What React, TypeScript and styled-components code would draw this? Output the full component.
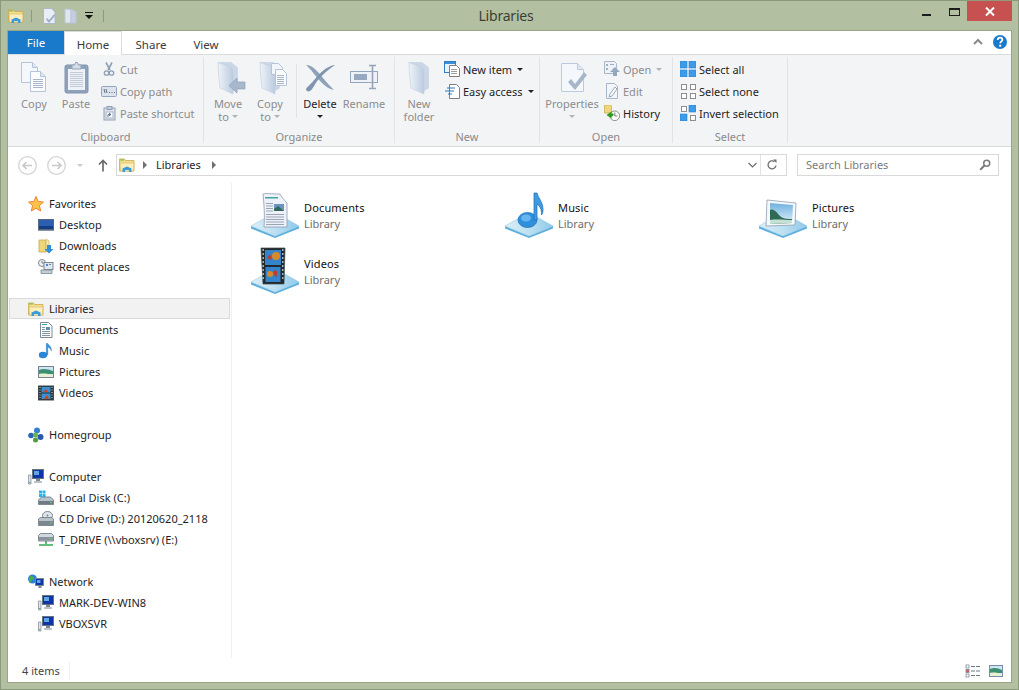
import React from "react";
import styled, { createGlobalStyle } from "styled-components";

const Global = createGlobalStyle`
  html, body { margin: 0; padding: 0; background: #b3bfa1; overflow: hidden; }
  body { font-family: "Noto Sans", "Open Sans", sans-serif; font-size: 11px; color: #1e1e1e; }
  * { box-sizing: border-box; }
  svg { display: block; flex: none; }
`;

const Frame = styled.div`
  width: 1019px; height: 690px; background: #b3bfa1; border: 1px solid #8b9a7a;
  padding: 0 7px 7px; display: flex; flex-direction: column;
`;
const TitleBar = styled.header`
  height: 30px; display: grid; grid-template-columns: 1fr auto 1fr; flex: none;
`;
const Qat = styled.div`display: flex; align-items: center; height: 29px;`;
const QatSep = styled.span<{ $mx: number }>`
  width: 1px; height: 12px; background: #8e9a80; margin: 0 ${p => p.$mx}px; 
`;
const Title = styled.h1`
  margin: 0; font-size: 14px; font-weight: 400; color: #3a3f36; line-height: 30px; padding-right: 7px; letter-spacing: -0.2px;
`;
const Controls = styled.div`display: flex; justify-content: flex-end; align-items: flex-start; margin-right: -1px;`;
const MinBtn = styled.div`width: 9px; height: 2px; background: #1c1c1c; margin: 13px 18px 0 0;`;
const MaxBtn = styled.div`width: 11px; height: 8px; border: 1px solid #1c1c1c; border-top-width: 2px; margin: 7px 7px 0 0;`;
const CloseBtn = styled.div`
  width: 45px; height: 20px; background: #c75050; color: #fff; display: flex; align-items: center; justify-content: center;
`;
const Inner = styled.div`
  flex: 1; display: flex; flex-direction: column; background: #fff; box-shadow: 0 0 0 1px #97a585;
`;
const TabRow = styled.nav`
  height: 24px; flex: none; display: flex; border-bottom: 1px solid #dadbdc; align-items: stretch;
`;
const FileTab = styled.div`
  width: 56px; height: 23px; background: #1979ca; color: #fff; font-size: 11.5px; display: flex; align-items: center; justify-content: center;
`;
const Tab = styled.div<{ $w: number; $active?: boolean }>`
  width: ${p => p.$w}px; height: 24px; display: flex; align-items: center; justify-content: center; font-size: 11.5px; color: #3b3b3b; padding-top: 2px;
  ${p => p.$active ? "background:#fff;border:1px solid #dadbdc;border-bottom:0;z-index:1;" : ""}
`;
const TabTools = styled.div`margin-left: auto; display: flex; align-items: center; gap: 10px; padding: 0 4px 2px 0;`;
const Ribbon = styled.section`
  height: 92px; flex: none; background: #f3f4f6; border-bottom: 1px solid #dadbdc; display: flex; align-items: stretch; padding: 2px 0 3px;
`;
const Group = styled.div<{ $w: number }>`
  width: ${p => p.$w}px; flex: none; border-right: 1px solid #e2e3e5; display: flex; flex-direction: column;
`;
const GroupBody = styled.div<{ $pl: number }>`
  flex: 1; display: flex; align-items: flex-start; padding: 2px 0 0 ${p => p.$pl}px;
`;
const GroupLabel = styled.div`
  height: 16px; line-height: 19px; text-align: center; color: #8a8a8a; font-size: 11px;
`;
const Large = styled.div<{ $w: number; $dark?: boolean }>`
  width: ${p => p.$w}px; flex: none; display: flex; flex-direction: column; align-items: center; color: ${p => p.$dark ? "#1e1e1e" : "#8c8c8c"};
`;
const LargeIcon = styled.div`height: 38px; padding-top: 1px;`;
const LargeLine = styled.div`height: 13px; line-height: 13px; font-size: 11px; white-space: nowrap; display: flex; align-items: center; gap: 3px;`;
const Caret = styled.span<{ $c?: string }>`
  display: inline-block; width: 0; height: 0; border: 3px solid transparent; border-bottom-width: 0; border-top-color: ${p => p.$c || "#b4b4b4"}; 
`;
const Stack = styled.div<{ $ml: number }>`margin-left: ${p => p.$ml}px; display: flex; flex-direction: column;`;
const Small = styled.div<{ $dark?: boolean }>`
  height: 22px; padding-bottom: 2px; display: flex; align-items: center; gap: 3px; white-space: nowrap; font-size: 11px; color: ${p => p.$dark ? "#1e1e1e" : "#8c8c8c"};
`;
const SmallCaret = styled.span`margin-left: 2px; display: flex;`;
const RibbonSep = styled.div`width: 1px; height: 54px; background: #e2e3e5; margin: 5px 1px 0 5px; flex: none;`;

const AddressRow = styled.div`
  height: 36px; flex: none; display: flex; align-items: center; padding: 0 12px 0 10px; font-size: 11px;
`;
const NavGroup = styled.div`display: flex; align-items: center; width: 98px; flex: none;`;
const AddressField = styled.div`
  width: 671px; height: 22px; border: 1px solid #d9d9d9; display: flex; align-items: center; padding-left: 2px; color: #1e1e1e;
`;
const Crumb = styled.span`margin: 0 3px 2px 9px;`;
const CrumbArrow = styled.span`
  width: 0; height: 0; border: 4px solid transparent; border-right-width: 0; border-left: 4px solid #6f6f6f; margin-left: 8px;
`;
const FieldEnd = styled.div`margin-left: auto; display: flex; align-items: center; height: 100%; padding-right: 8px;`;
const FieldSep = styled.span`width: 1px; height: 20px; background: #e3e3e3; margin: 0 5px 0 3px;`;
const SearchField = styled.div`
  width: 202px; height: 22px; margin-left: 10px; border: 1px solid #d9d9d9; display: flex; align-items: center; justify-content: space-between; padding: 0 7px 0 8px; color: #7a7a7a;
`;
const SearchText = styled.span`margin-bottom: 2px;`;
const Main = styled.main`flex: 1; display: flex; min-height: 0;`;
const Sidebar = styled.aside`
  width: 224px; flex: none; border-right: 1px solid #eff0f1; padding: 10px 0 0 1px; margin-bottom: 2px;
`;
const TreeRow = styled.div<{ $level?: number; $selected?: boolean }>`
  width: 221px; height: 21px; display: flex; align-items: center; gap: 5px; padding-left: ${p => (p.$level || 0) * 10 + 18}px;
  border: 1px solid ${p => p.$selected ? "#dadada" : "transparent"}; background: ${p => p.$selected ? "#f2f2f2" : "transparent"};
  white-space: nowrap; color: #1e1e1e; font-size: 11px;
`;
const TreeGap = styled.div`height: 21px;`;
const Items = styled.div`
  flex: 1; padding: 7px 0 0 18px; display: grid; grid-template-columns: repeat(3, 254px); grid-auto-rows: 48px; row-gap: 8px; align-content: start;
`;
const Item = styled.div`display: flex; gap: 4px;`;
const ItemText = styled.div`padding-top: 10px; line-height: 16px; font-size: 11px;`;
const ItemName = styled.div`color: #111; letter-spacing: .15px;`;
const ItemKind = styled.div`color: #6d6d6d;`;
const StatusBar = styled.footer`
  height: 22px; flex: none; display: flex; align-items: center; padding: 0 8px 0 14px; color: #444; font-size: 11px;
`;
const StatusText = styled.span`width: 48px; border-right: 1px solid #efefef; line-height: 18px;`;
const StatusIcons = styled.div`margin-left: auto; display: flex; align-items: center; gap: 6px;`;

/* ---------- ribbon icons ---------- */
const P = "#f4f7fb", PS = "#b5c4d8", L = "#b3c0cf";
const Ico36 = ({ children }: { children: React.ReactNode }) => <svg width="36" height="36" viewBox="0 0 36 36">{children}</svg>;
const Ico16 = ({ children }: { children: React.ReactNode }) => <svg width="16" height="16" viewBox="0 0 16 16">{children}</svg>;
const Lines = ({ x, y, w, n, g = 2, c = L }: { x: number; y: number; w: number; n: number; g?: number; c?: string }) => (
  <path d={Array.from({ length: n }, (_, i) => `M${x} ${y + i * g + .5}h${w}`).join("")} stroke={c} fill="none" />
);
const CopyIco = () => <Ico36>
  <path d="M5.5 2.5h11l5 5v15h-16z" fill={P} stroke={PS} /><path d="M16.5 2.5v5h5" fill="#dfe6ef" stroke={PS} />
  <path d="M14.5 11.5h10l5 5v15h-15z" fill="#fafbfd" stroke={PS} /><path d="M24.5 11.5v5h5" fill="#dfe6ef" stroke={PS} />
  <Lines x={17} y={19} w={10} n={5} c="#a8b5c6" />
</Ico36>;
const PasteIco = () => <Ico36>
  <rect x="7" y="5" width="23" height="28" rx="2" fill="#8fa2bb" stroke="#8193ad" /><rect x="10" y="9" width="17" height="21" fill="#eef1f6" />
  <path d="M14 5h2.5l1-2.5h2l1 2.500H23v4H14z" fill="#d6dde7" stroke="#92a3ba" /><Lines x={12} y={12} w={13} n={8} g={2} c="#c2ccd8" />
</Ico36>;
const CutIco = () => <Ico16>
  <path d="M5 1.5 9 9M11 1.5 7 9" stroke="#8fa0b5" strokeWidth="1.6" fill="none" />
  <circle cx="5.5" cy="12" r="2.2" fill="none" stroke="#8fa0b5" strokeWidth="1.3" /><circle cx="10.5" cy="12" r="2.2" fill="none" stroke="#8fa0b5" strokeWidth="1.3" />
</Ico16>;
const CopyPathIco = () => <Ico16>
  <rect x=".5" y="3.5" width="15" height="10" rx="1" fill="#dde3ec" stroke="#93a4ba" />
  <path d="M3 6l1 4M5 6l1 4" stroke="#5f6f85" fill="none" /><path d="M8 9.5h1M10.5 9.5h1M13 9.5h1" stroke="#5f6f85" />
</Ico16>;
const PasteShortIco = () => <Ico16>
  <rect x="3" y="3" width="11" height="12" fill="#dfe4ec" stroke="#8fa0b5" /><rect x="6" y="1.5" width="5" height="3" fill="#c0cad8" stroke="#8fa0b5" />
  <rect x="5" y="7" width="7" height="6" fill="#fff" stroke="#a9b5c6" /><path d="M7 12V9.5h2.5M8 8v0l2 1.5L8 11" stroke="#5d738f" fill="none" />
</Ico16>;
const FolderBack = () => <>
  <defs><linearGradient id="fg" x1="0" y1="0" x2="1" y2="0"><stop offset="0" stopColor="#eef3f9" /><stop offset="1" stopColor="#bccbdf" /></linearGradient></defs>
  <path d="M8 2.500h13l6.500 5V28l-5 3z" fill="#cbd7e7" stroke="#c3d0e2" strokeWidth=".6" />
  <path d="M8 2.500l11 3.500c3 1.500 4 4 4 7V34l-13-6C9 20 8 10 8 2.500z" fill="url(#fg)" stroke="#c0cde0" strokeWidth=".6" />
</>;
const MoveIco = () => <Ico36><FolderBack />
  <path d="M35 22h-8v-4l-8 7.500 8 7.500v-4h8z" fill="#a7b8cd" stroke="#8ea1b8" strokeWidth=".7" />
</Ico36>;
const CopyToIco = () => <Ico36><FolderBack />
  <path d="M19.500 3.500h7l4 4v7h-11z" fill="#f2f5fa" stroke={PS} />
  <path d="M23.500 9.500h7l4 4v12h-11z" fill="#fafbfd" stroke={PS} /><Lines x={25} y={15} w={7} n={5} c="#a8b5c6" />
</Ico36>;
const DeleteIco = () => <Ico36>
  <path d="M4 5c7 0 13 8 17 13 4 5 8 9 11 12-5-1-9-4-13-8C14 17 9 9 4 5z" fill="#8ea2b9" />
  <path d="M33 5c-8 1-14 7-20 14-4 5-8 8-9 10 0 2 2 3 4 2 3-2 4-6 8-11 5-6 11-11 17-15z" fill="#8095ae" />
</Ico36>;
const RenameIco = () => <Ico36>
  <rect x="4.500" y="11.500" width="27" height="11" fill="#eef2f7" stroke="#94a6bc" /><rect x="8" y="14" width="13" height="6" fill="#96a9c1" />
  <path d="M23 5.500h7M23 28.500h7M26.500 6v22" stroke="#93a4b8" strokeWidth="1.6" fill="none" />
</Ico36>;
const NewFolderIco = () => <Ico36><FolderBack /></Ico36>;
const NewItemIco = () => <Ico16>
  <rect x=".5" y=".5" width="11" height="11" fill="#e9f2fb" stroke="#2f7fc8" /><path d="M1 1h10v2H1z" fill="#3b8dd6" />
  <path d="M5.500 4.500h7l3 3v8h-10z" fill="#fff" stroke="#7f7f7f" /><Lines x={7} y={8} w={6} n={3} c="#9c9c9c" />
</Ico16>;
const EasyIco = () => <Ico16>
  <path d="M5.500 1.500h7l3 3v11h-10z" fill="#fff" stroke="#7f7f7f" />
  <path d="M3 5h8M1 8h9M4 11h4" stroke="#2478c4" strokeWidth="1.2" fill="none" />
</Ico16>;
const PropertiesIco = () => <Ico36>
  <path d="M7.500 3.500h16l6 6v22h-22z" fill="#f4f7fb" stroke="#bccae0" />
  <path d="M23.500 3.500v6h6" fill="#dde5ef" stroke="#bccae0" />
  <path d="M14 22l3-3 4 5 9-12 3 3-12 15z" fill="#a7b6ca" />
</Ico36>;
const OpenIco = () => <Ico16>
  <path d="M.5.5h10l2 2v5h-3v5h-9z" fill="#eef2f7" stroke="#a9b6c7" /><path d="M2 3h2v2H2zM2 7h2v2H2zM6 3h4v1H6z" fill="#9fb0c4" />
  <path d="M11 6l5 5h-3v4H9v-4H6z" fill="#93a7bf" />
</Ico16>;
const EditIco = () => <Ico16>
  <path d="M2.500.5h8l3 3v12h-11z" fill="#f2f5fa" stroke="#a9b6c7" />
  <path d="M11 4L6 11l-1 3 3-1 5-7z" fill="#fff" stroke="#98a8bc" />
</Ico16>;
const HistoryIco = () => <Ico16>
  <path d="M.5 0h6l1 1v7H.5z" fill="#f0d77f" stroke="#c6a63f" strokeWidth=".7" />
  <circle cx="10.800" cy="10.800" r="4.800" fill="#fff" stroke="#757575" strokeWidth=".8" />
  <path d="M10.800 7.500v3.500h2.500" stroke="#555" fill="none" strokeWidth=".8" />
  <path d="M7.500 6.500L2.500 10l5 3.500V11.500c1 0 1.500-.5 2-1.500V8.500H7.500z" fill="#2e9a1d" />
</Ico16>;
const Grid4 = ({ on }: { on: boolean[] }) => <Ico16>
  {[[0, 0], [9, 0], [0, 9], [9, 9]].map(([x, y], i) => on[i]
    ? <rect key={i} x={x} y={y} width="7" height="7" fill="#3d9be9" stroke="#2b83d0" strokeWidth=".6" />
    : <rect key={i} x={x + 1.500} y={y + 1.500} width="5" height="5" fill="#fff" stroke="#8d8d8d" />)}
</Ico16>;

/* ---------- shell icons ---------- */
const LibFolder = () => <Ico16>
  <path d="M.5 3.500V2h5l1 1.500h8.500V14H.5z" fill="#f5dd8c" stroke="#c9a94e" strokeWidth=".8" /><path d="M1 2.500h4v1H1z" fill="#6cbf4a" />
  <path d="M1 6h14l-.500 8H1.500z" fill="#fbeebb" stroke="#d4b85f" strokeWidth=".6" />
  <path d="M3.500 15v-3.500L8 9.500l4.500 2V15H10v-2H6v2z" fill="#3a9bdc" />
</Ico16>;
const Star = () => <Ico16><path d="M8 .5l2.200 5 5.300.500-4 3.500 1.200 5.500L8 12.300 3.300 15l1.200-5.500-4-3.500 5.300-.500z" fill="#fdc24a" stroke="#e67b2a" strokeWidth=".9" /></Ico16>;
const DesktopIco = () => <Ico16><rect x=".5" y="2.500" width="15" height="10" fill="#2c5fae" stroke="#5a6a7e" /><path d="M1 9h14v3H1z" fill="#163d85" /><path d="M0 13h16v1H0z" fill="#8795a5" /></Ico16>;
const DownloadsIco = () => <Ico16>
  <path d="M1 2h6l1 1v11H1z" fill="#f0d67b" stroke="#c7a84b" strokeWidth=".8" /><path d="M8 1l3 2v9l-3 2z" fill="#fae9ac" stroke="#c7a84b" strokeWidth=".6" />
  <path d="M9 7h4v4h2.500L11 15.500 6.500 11H9z" fill="#2f8fdc" />
</Ico16>;
const RecentIco = () => <Ico16>
  <circle cx="4" cy="4" r="3.500" fill="#eef1f4" stroke="#7c8894" /><path d="M4 2v2h2" stroke="#555" fill="none" strokeWidth=".7" />
  <rect x="6" y="3.500" width="9" height="7" fill="#dfe7ef" stroke="#7c8894" /><path d="M8 5h2v2H8zM11 5h2v1h-2z" fill="#4d8ac5" />
  <path d="M3 11h11v3.500H3z" fill="#c4ccd4" stroke="#7c8894" strokeWidth=".8" />
</Ico16>;
const DocIco = () => <Ico16><path d="M2.500.5h8l3.500 3.500v11.500H2.500z" fill="#fff" stroke="#7e8a98" /><path d="M4 2h5v1H4z" fill="#46a0a0" /><path d="M8 5h4v3H8z" fill="#5c8bc0" /><Lines x={4} y={5} w={3} n={2} c="#8a95a3" /><Lines x={4} y={9} w={8} n={3} c="#8a95a3" /></Ico16>;
const NoteIco = () => <Ico16>
  <ellipse cx="5" cy="12" rx="4.200" ry="3.300" fill="#2a87d8" /><path d="M8.300 12V.5h1.500c1 2 4 3 3.500 7.500-.5-2-2-3.500-3.500-4V12z" fill="#3795e0" stroke="#1c6fb9" strokeWidth=".4" />
</Ico16>;
const PicIco = () => <Ico16><rect x=".5" y="2.500" width="15" height="11" fill="#cfe6f5" stroke="#7a8490" /><path d="M1 6c4-2 9-1 14 1v3H1z" fill="#3c8f72" /><path d="M1 10c5-1 9 0 14 1v2H1z" fill="#e9f1d3" /></Ico16>;
const FilmIco = () => <Ico16><rect x=".5" y="1" width="15" height="14" fill="#233" stroke="#3d4a55" /><path d="M3.500 2h9v5.500h-9z" fill="#3d8fd0" /><path d="M3.500 8.500h9V14h-9z" fill="#3d8fd0" /><path d="M5 7l3-3 2 3zM6 14l3-4 2 4z" fill="#c8402f" /><path d="M1.500 2.500h1M1.500 5h1M1.500 7.500h1M1.500 10h1M1.500 12.500h1M13.500 2.500h1M13.500 5h1M13.500 7.500h1M13.500 10h1M13.500 12.500h1" stroke="#dfe6ea" /></Ico16>;
const HomeIco = () => <Ico16><circle cx="3" cy="8.500" r="2.800" fill="#2d63b8" /><circle cx="9" cy="3.500" r="3" fill="#3a7ed0" /><circle cx="12.500" cy="10" r="3" fill="#2a59ab" /><circle cx="7.500" cy="13" r="2.500" fill="#4e9d3c" /><circle cx="7.500" cy="8" r="2.500" fill="#65b64a" /></Ico16>;
const PcIco = () => <Ico16>
  <path d="M.5 6h2.500v9H.5z" fill="#dfe5ea" stroke="#7b8794" strokeWidth=".7" /><path d="M1 13h1.500v1H1z" fill="#48b44b" />
  <rect x="4.500" y=".5" width="11" height="9" fill="#1033a8" stroke="#66727e" /><path d="M6 2h5v4H6z" fill="#5fa6e3" /><path d="M8 10h4v2H8zM6 12.500h8v1H6z" fill="#7e8893" />
</Ico16>;
const DiskC = () => <Ico16>
  <path d="M1 2h3v3H1zM4.500 2h3v3h-3zM1 5.500h3v3H1zM4.500 5.500h3v3h-3z" fill="#23b5ef" transform="translate(0 -1.500)" />
  <path d="M.5 10l3-3h9l3 3v4.500H.5z" fill="#b8c2cb" stroke="#68737e" strokeWidth=".8" /><path d="M1 11h14v3H1z" fill="#6f7a85" /><path d="M12 12h2v1h-2z" fill="#5fd35f" />
</Ico16>;
const DiskD = () => <Ico16>
  <ellipse cx="9.500" cy="4.500" rx="5" ry="4" fill="#dfe5ea" stroke="#7a8592" /><circle cx="9.500" cy="4.500" r="1" fill="#7a8592" />
  <path d="M.5 8l2-1.500h11l2 1.500v6.500H.5z" fill="#b8c2cb" stroke="#68737e" strokeWidth=".8" /><path d="M1 10h14v4H1z" fill="#7b8690" /><path d="M12 11.500h2v1h-2z" fill="#5fd35f" />
</Ico16>;
const DiskNet = () => <Ico16>
  <path d="M.5 3.500l2-2h11l2 2V9h-15z" fill="#d0d7de" stroke="#68737e" strokeWidth=".8" /><path d="M1 5h14v3.500H1z" fill="#87929c" /><path d="M11 6h2.500v1H11z" fill="#5fd35f" />
  <path d="M8 9v3M1 13h14" stroke="#35a853" strokeWidth="1.600" />
</Ico16>;
const NetIco = () => <Ico16>
  <circle cx="4.500" cy="5" r="4.500" fill="#2d83d6" /><path d="M2 2c2 0 4 1 4 2S3 6 3 8 1 7 1 5z" fill="#4bb04a" />
  <rect x="7.500" y="4.500" width="8" height="7" fill="#1033a8" stroke="#7b8794" /><path d="M9 6h3.500v3H9z" fill="#5fa6e3" /><path d="M10.500 12h3v2h-3z" fill="#7e8893" />
</Ico16>;
const ChevUp = () => <svg width="10" height="7" viewBox="0 0 10 7"><path d="M1 6l4-4 4 4" stroke="#8a8a8a" strokeWidth="2" fill="none" /></svg>;
const HelpIco = () => <svg width="14" height="14" viewBox="0 0 14 14"><circle cx="7" cy="7" r="7" fill="#1979ca" /><path d="M4.700 5c0-1.500 1-2.300 2.400-2.300S9.400 3.500 9.400 5 7.200 6.600 7.200 8.300" stroke="#fff" strokeWidth="1.700" fill="none" /><rect x="6.200" y="9.700" width="2" height="2" fill="#fff" /></svg>;
const CircleNav = ({ d }: { d: string }) => <svg width="19" height="19" viewBox="0 0 19 19"><circle cx="9.500" cy="9.500" r="8.800" fill="#fff" stroke="#d4d4d4" strokeWidth="1.300" /><path d={d} fill="none" stroke="#c9c9c9" strokeWidth="1.700" /></svg>;
const UpArrow = () => <svg width="10" height="13" viewBox="0 0 10 13"><path d="M5 1.500V12.500M1 5.500l4-4 4 4" stroke="#6b6b6b" strokeWidth="1.700" fill="none" /></svg>;
const ChevDown = () => <svg width="9" height="6" viewBox="0 0 9 6"><path d="M.5 1l4 4 4-4" stroke="#6b6b6b" strokeWidth="1.200" fill="none" /></svg>;
const Refresh = () => <svg width="12" height="12" viewBox="0 0 12 12"><path d="M10 6.500A4 4 0 1 1 8.500 2.700" stroke="#6f6f6f" strokeWidth="1.300" fill="none" /><path d="M7 .5h3.500V4z" fill="#6f6f6f" /></svg>;
const SearchIco = () => <svg width="12" height="12" viewBox="0 0 12 12"><circle cx="7.700" cy="4.300" r="3" fill="none" stroke="#7a7a7a" strokeWidth="1.500" /><path d="M5.500 6.500L1.200 10.800" stroke="#7a7a7a" strokeWidth="2" /></svg>;

const Plate = ({ id }: { id: string }) => <>
  <defs><linearGradient id={id} x1="0" y1="0" x2="1" y2="0"><stop offset="0" stopColor="#dceef8" /><stop offset=".5" stopColor="#bde0f2" /><stop offset="1" stopColor="#8ec9e9" /></linearGradient></defs>
  <path d="M1 36 L25 46 L49 36 V38.500 L25 48 L1 38.500z" fill="#5fb0dc" />
  <path d="M1 36 L17 27 H33 L49 36 L25 46z" fill={`url(#${id})`} stroke="#8cc7e6" strokeWidth=".5" />
</>;
const BigDocs = () => <svg width="50" height="48" viewBox="0 0 50 48"><Plate id="p1" />
  <path d="M13 4c3-1 8 0 17 0 1 2 4 6 7 9v24H14C15 26 14 14 13 4z" fill="#eef1f8" stroke="#8e9cb1" strokeWidth=".8" />
  <path d="M15 7h13v1.500H15z" fill="#45a3a3" /><path d="M24 14h10v7H24z" fill="#6b94c2" /><path d="M24 19l4-3 6 5H24z" fill="#2f6a58" />
  <Lines x={16} y={13} w={7} n={4} g={2.500} c="#98a5b7" /><Lines x={16} y={24} w={18} n={5} g={2.500} c="#98a5b7" />
</svg>;
const BigMusic = () => <svg width="50" height="48" viewBox="0 0 50 48"><Plate id="p2" />
  <ellipse cx="23.500" cy="30" rx="9.500" ry="7.500" fill="#2f8fdc" stroke="#1a6cb5" strokeWidth=".7" />
  <ellipse cx="22" cy="28" rx="5" ry="3.500" fill="#66b7ee" />
  <path d="M30 30V3h3c1 5 6.500 9 6 18-.2 2-.8 3-1.500 4 .5-6-2-9-4.500-11v16z" fill="#3f9ae2" stroke="#1a6cb5" strokeWidth=".7" />
</svg>;
const BigPics = () => <svg width="50" height="48" viewBox="0 0 50 48"><Plate id="p3" />
  <defs><linearGradient id="sky" x1="0" y1="0" x2="0" y2="1"><stop offset="0" stopColor="#6fb1e0" /><stop offset="1" stopColor="#e4f2fa" /></linearGradient></defs>
  <path d="M9 10l29 3-1 22-29 1z" fill="#f6f9fc" stroke="#8d9dad" strokeWidth=".8" />
  <path d="M12 13l23 2-1 18-22 1z" fill="url(#sky)" />
  <path d="M12 20c4-2 7 3 10 6s8 3 12 3v4l-22 1z" fill="#2e6a54" /><path d="M12 30c8-1 14 0 22 0v3l-22 1z" fill="#c5e0d4" />
</svg>;
const BigVideo = () => <svg width="50" height="48" viewBox="0 0 50 48"><Plate id="p4" />
  <path d="M11 2h24l-1 36H13z" fill="#22292c" stroke="#3e4a4f" strokeWidth=".7" />
  <path d="M15 4h16v15H15z" fill="#3583c8" /><path d="M15.500 21h15v15h-15z" fill="#3583c8" />
  <circle cx="26" cy="10" r="4" fill="#d9892a" /><path d="M17 12l3-4 2 6zM24 28c-2-5 4-5 3 0l-1 4z" fill="#c13a2b" /><circle cx="20" cy="28" r="3" fill="#d9892a" />
  <path d="M12.500 4h1.500M12.500 8h1.500M12.500 12h1.500M12.500 16h1.500M12.500 20h1.500M12.500 24h1.500M12.500 28h1.500M12.500 32h1.500M32 4h1.500M32 8h1.500M32 12h1.500M32 16h1.500M32 20h1.500M32 24h1.500M32 28h1.500M32 32h1.500" stroke="#cfe0e6" strokeWidth="1.500" />
</svg>;

const tree: ({ t: string; l?: number; i: React.ReactNode; s?: boolean } | null)[] = [
  { t: "Favorites", i: <Star /> }, { t: "Desktop", l: 1, i: <DesktopIco /> }, { t: "Downloads", l: 1, i: <DownloadsIco /> }, { t: "Recent places", l: 1, i: <RecentIco /> }, null,
  { t: "Libraries", i: <LibFolder />, s: true }, { t: "Documents", l: 1, i: <DocIco /> }, { t: "Music", l: 1, i: <NoteIco /> }, { t: "Pictures", l: 1, i: <PicIco /> }, { t: "Videos", l: 1, i: <FilmIco /> }, null,
  { t: "Homegroup", i: <HomeIco /> }, null,
  { t: "Computer", i: <PcIco /> }, { t: "Local Disk (C:)", l: 1, i: <DiskC /> }, { t: "CD Drive (D:) 20120620_2118", l: 1, i: <DiskD /> }, { t: "T_DRIVE (\\\\vboxsrv) (E:)", l: 1, i: <DiskNet /> }, null,
  { t: "Network", i: <NetIco /> }, { t: "MARK-DEV-WIN8", l: 1, i: <PcIco /> }, { t: "VBOXSVR", l: 1, i: <PcIco /> },
];
const items = [
  { n: "Documents", i: <BigDocs /> }, { n: "Music", i: <BigMusic /> }, { n: "Pictures", i: <BigPics /> }, { n: "Videos", i: <BigVideo /> },
];

export default function App() {
  return <>
    <Global />
    <Frame>
      <TitleBar>
        <Qat>
          <LibFolder /><QatSep $mx={7} />
          <Stack $ml={3}><Ico16><path d="M1.500.5h8l3.500 3.500v11.500H1.500z" fill="#e8eef6" stroke="#a9b8cc" /><path d="M5 10l2 2 5-6 1.500 1.500L7 15l-3-3.500z" fill="#a3b3c7" /></Ico16></Stack>
          <Stack $ml={6}><Ico16><path d="M1 1l6 .5V15H1z" fill="#dfe6f0" stroke="#bac7d8" /><path d="M7 1.500l5 2V15H7z" fill="#c3cfe0" stroke="#bac7d8" /></Ico16></Stack>
          <Stack $ml={5}><svg width="8" height="7" viewBox="0 0 8 7"><path d="M0 0h8v1H0zM0 3h8L4 7z" fill="#111" /></svg></Stack>
          <QatSep $mx={10} />
        </Qat>
        <Title>Libraries</Title>
        <Controls>
          <MinBtn /><MaxBtn />
          <CloseBtn><svg width="10" height="9" viewBox="0 0 10 9"><path d="M1 .5l8 8M9 .5l-8 8" stroke="#fff" strokeWidth="2" /></svg></CloseBtn>
        </Controls>
      </TitleBar>
      <Inner>
        <TabRow>
          <FileTab>File</FileTab>
          <Tab $w={58} $active>Home</Tab>
          <Tab $w={58}>Share</Tab>
          <Tab $w={52}>View</Tab>
          <TabTools><ChevUp /><HelpIco /></TabTools>
        </TabRow>
        <Ribbon>
          <Group $w={196}>
            <GroupBody $pl={5}>
              <Large $w={42}><LargeIcon><CopyIco /></LargeIcon><LargeLine>Copy</LargeLine></Large>
              <Large $w={42}><LargeIcon><PasteIco /></LargeIcon><LargeLine>Paste</LargeLine></Large>
              <Stack $ml={4}>
                <Small><CutIco /> Cut</Small>
                <Small><CopyPathIco /> Copy path</Small>
                <Small><PasteShortIco /> Paste shortcut</Small>
              </Stack>
            </GroupBody>
            <GroupLabel>Clipboard</GroupLabel>
          </Group>
          <Group $w={191}>
            <GroupBody $pl={3}>
              <Large $w={42}><LargeIcon><MoveIco /></LargeIcon><LargeLine>Move</LargeLine><LargeLine>to <Caret /></LargeLine></Large>
              <Large $w={42}><LargeIcon><CopyToIco /></LargeIcon><LargeLine>Copy</LargeLine><LargeLine>to <Caret /></LargeLine></Large>
              <RibbonSep />
              <Large $w={44} $dark><LargeIcon><DeleteIco /></LargeIcon><LargeLine>Delete</LargeLine><LargeLine><Caret $c="#222" /></LargeLine></Large>
              <Large $w={44}><LargeIcon><RenameIco /></LargeIcon><LargeLine>Rename</LargeLine></Large>
            </GroupBody>
            <GroupLabel>Organize</GroupLabel>
          </Group>
          <Group $w={145}>
            <GroupBody $pl={3}>
              <Large $w={42}><LargeIcon><NewFolderIco /></LargeIcon><LargeLine>New</LargeLine><LargeLine>folder</LargeLine></Large>
              <Stack $ml={4}>
                <Small $dark><NewItemIco /> New item<SmallCaret><Caret $c="#222" /></SmallCaret></Small>
                <Small $dark><EasyIco /> Easy access<SmallCaret><Caret $c="#222" /></SmallCaret></Small>
              </Stack>
            </GroupBody>
            <GroupLabel>New</GroupLabel>
          </Group>
          <Group $w={133}>
            <GroupBody $pl={2}>
              <Large $w={60}><LargeIcon><PropertiesIco /></LargeIcon><LargeLine>Properties</LargeLine><LargeLine><Caret /></LargeLine></Large>
              <Stack $ml={2}>
                <Small><OpenIco /> Open<SmallCaret><Caret /></SmallCaret></Small>
                <Small><EditIco /> Edit</Small>
                <Small $dark><HistoryIco /> History</Small>
              </Stack>
            </GroupBody>
            <GroupLabel>Open</GroupLabel>
          </Group>
          <Group $w={115}>
            <GroupBody $pl={7}>
              <Stack $ml={0}>
                <Small $dark><Grid4 on={[true, true, true, true]} /> Select all</Small>
                <Small $dark><Grid4 on={[false, false, false, false]} /> Select none</Small>
                <Small $dark><Grid4 on={[false, true, true, false]} /> Invert selection</Small>
              </Stack>
            </GroupBody>
            <GroupLabel>Select</GroupLabel>
          </Group>
        </Ribbon>
        <AddressRow>
          <NavGroup>
            <CircleNav d="M14 9.500H5M8.500 6l-3.500 3.500L8.500 13" />
            <Stack $ml={10}><CircleNav d="M5 9.500h9M10.500 6l3.500 3.500L10.500 13" /></Stack>
            <Stack $ml={11}><Caret $c="#c9c9c9" /></Stack>
            <Stack $ml={15}><UpArrow /></Stack>
          </NavGroup>
          <AddressField>
            <LibFolder /><CrumbArrow /><Crumb>Libraries</Crumb><CrumbArrow />
            <FieldEnd><ChevDown /><FieldSep /><Refresh /></FieldEnd>
          </AddressField>
          <SearchField><SearchText>Search Libraries</SearchText><SearchIco /></SearchField>
        </AddressRow>
        <Main>
          <Sidebar>
            {tree.map((r, i) => r
              ? <TreeRow key={i} $level={r.l} $selected={r.s}>{r.i}{r.t}</TreeRow>
              : <TreeGap key={i} />)}
          </Sidebar>
          <Items>
            {items.map(it => <Item key={it.n}>{it.i}<ItemText><ItemName>{it.n}</ItemName><ItemKind>Library</ItemKind></ItemText></Item>)}
          </Items>
        </Main>
        <StatusBar>
          <StatusText>4 items</StatusText>
          <StatusIcons>
            <Ico16><rect x="1" y="2" width="3" height="3" fill="#fff" stroke="#7d8a98" strokeWidth=".8" /><rect x="1" y="6.500" width="3" height="3" fill="#e4584d" stroke="#7d8a98" strokeWidth=".8" /><rect x="1" y="11" width="3" height="3" fill="#fff" stroke="#7d8a98" strokeWidth=".8" /><path d="M6 3.500h4M11 3.500h4M6 8h4M11 8h4M6 12.500h4M11 12.500h4" stroke="#6d7884" /></Ico16>
            <Ico16><rect x="2.500" y="2.500" width="13" height="11" fill="#cfe6f5" stroke="#7a8bb0" /><path d="M3 6c4-2 8-1 12 1v3H3z" fill="#3c8f72" /><path d="M3 10c4-1 8 0 12 1v2H3z" fill="#e9f1d3" /></Ico16>
          </StatusIcons>
        </StatusBar>
      </Inner>
    </Frame>
  </>;
}
